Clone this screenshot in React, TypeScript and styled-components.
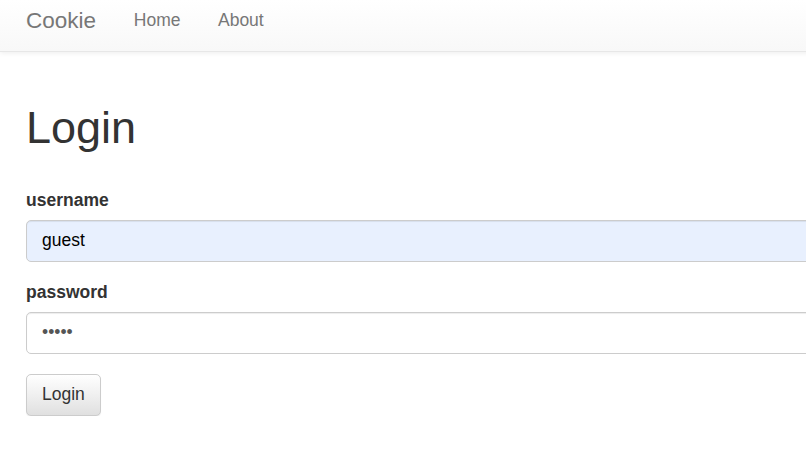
import styled, { createGlobalStyle } from 'styled-components';

const GlobalStyle = createGlobalStyle`
  html, body {
    margin: 0;
    padding: 0;
    overflow: hidden;
    background: #fff;
    font-family: "Liberation Sans", Arial, sans-serif;
    color: #333;
  }
`;

const Page = styled.div`
  min-width: 1100px;
`;

const Navbar = styled.nav`
  display: flex;
  align-items: flex-start;
  height: 52px;
  padding: 8px 0 0 26px;
  box-sizing: border-box;
  background-image: linear-gradient(to bottom, #fff 0%, #f8f8f8 100%);
  border-bottom: 1px solid #e7e7e7;
  box-shadow: inset 0 1px 0 rgba(255, 255, 255, .15), 0 1px 5px rgba(0, 0, 0, .075);
`;

const Brand = styled.a`
  font-size: 22.5px;
  line-height: 25px;
  color: #777;
  text-decoration: none;
  margin-right: 19px;
`;

const NavLink = styled.a`
  font-size: 17.5px;
  line-height: 25px;
  color: #777;
  text-decoration: none;
  padding: 0 18.75px;
`;

const Content = styled.main`
  padding: 51px 0 0 26px;
  width: 1000px;
`;

const Title = styled.h1`
  font-size: 45px;
  font-weight: 500;
  line-height: 49.5px;
  margin: 0 0 35px;
  color: #333;
`;

const FormGroup = styled.div`
  margin-bottom: 18px;
`;

const Label = styled.label`
  display: block;
  font-size: 17.5px;
  line-height: 25px;
  font-weight: bold;
  margin-bottom: 7px;
  color: #333;
`;

const Field = styled.input<{ $filled?: boolean }>`
  display: block;
  width: 100%;
  height: 42px;
  box-sizing: border-box;
  padding: 7.5px 15px;
  font-family: "Liberation Sans", Arial, sans-serif;
  font-size: 17.5px;
  color: ${p => (p.$filled ? '#000' : '#555')};
  background: ${p => (p.$filled ? '#e8f0fe' : '#fff')};
  border: 1px solid #ccc;
  border-radius: 5px;
  box-shadow: inset 0 1px 1px rgba(0, 0, 0, .075);
  outline: none;
`;

const Button = styled.button`
  margin-top: 2px;
  height: 42px;
  padding: 0 15px;
  font-family: "Liberation Sans", Arial, sans-serif;
  font-size: 17.5px;
  color: #333;
  background-image: linear-gradient(to bottom, #fff 0%, #e0e0e0 100%);
  border: 1px solid #ccc;
  border-radius: 5px;
  box-shadow: inset 0 1px 0 rgba(255, 255, 255, .15), 0 1px 1px rgba(0, 0, 0, .075);
  cursor: pointer;
`;

const App = () => {
  return (
    <Page>
      <GlobalStyle />
      <Navbar>
        <Brand href="#">Cookie</Brand>
        <NavLink href="#">Home</NavLink>
        <NavLink href="#">About</NavLink>
      </Navbar>

      <Content>
        <Title>Login</Title>
        <form onSubmit={e => e.preventDefault()}>
          <FormGroup>
            <Label htmlFor="username">username</Label>
            <Field id="username" $filled defaultValue="guest" />
          </FormGroup>
          <FormGroup>
            <Label htmlFor="password">password</Label>
            <Field id="password" type="password" defaultValue="guest" />
          </FormGroup>
          <Button type="submit">Login</Button>
        </form>
      </Content>
    </Page>
  );
};

export default App;
